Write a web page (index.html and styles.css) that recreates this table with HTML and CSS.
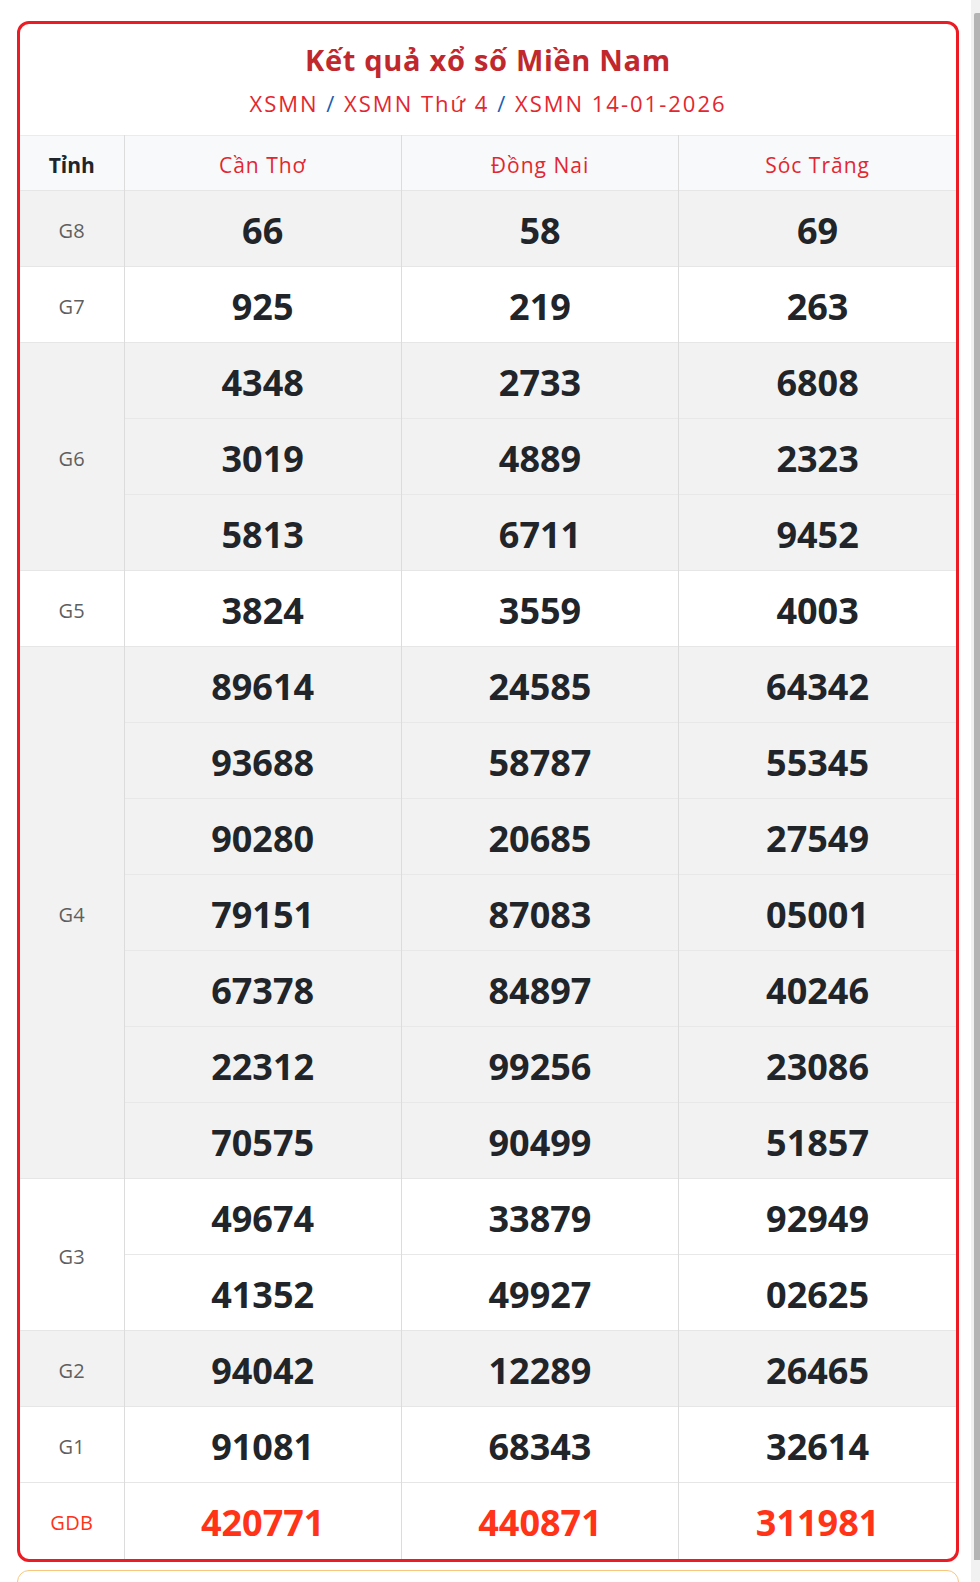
FILE: index.html
```html
<!DOCTYPE html>
<html lang="vi">
<head>
<meta charset="utf-8">
<title>Kết quả xổ số Miền Nam</title>
<link rel="stylesheet" href="styles.css">
</head>
<body>
<div class="page">
  <main class="main">
    <section class="card">
      <header class="card-head">
        <h1 class="title">Kết quả xổ số Miền Nam</h1>
        <div class="crumbs"><a href="#">XSMN</a> <span class="sep">/</span> <a href="#">XSMN Thứ 4</a> <span class="sep">/</span> <a href="#">XSMN 14-01-2026</a></div>
      </header>
      <table class="results">
        <colgroup><col class="c-label"><col><col><col></colgroup>
        <thead>
          <tr><th class="lbl-h">Tỉnh</th><th>Cần Thơ</th><th>Đồng Nai</th><th>Sóc Trăng</th></tr>
        </thead>
        <tbody class="gray">
          <tr><td class="lbl">G8</td><td>66</td><td>58</td><td>69</td></tr>
        </tbody>
        <tbody>
          <tr><td class="lbl">G7</td><td>925</td><td>219</td><td>263</td></tr>
        </tbody>
        <tbody class="gray">
          <tr><td class="lbl" rowspan="3">G6</td><td>4348</td><td>2733</td><td>6808</td></tr>
          <tr class="sub"><td>3019</td><td>4889</td><td>2323</td></tr>
          <tr class="sub"><td>5813</td><td>6711</td><td>9452</td></tr>
        </tbody>
        <tbody>
          <tr><td class="lbl">G5</td><td>3824</td><td>3559</td><td>4003</td></tr>
        </tbody>
        <tbody class="gray">
          <tr><td class="lbl" rowspan="7">G4</td><td>89614</td><td>24585</td><td>64342</td></tr>
          <tr class="sub"><td>93688</td><td>58787</td><td>55345</td></tr>
          <tr class="sub"><td>90280</td><td>20685</td><td>27549</td></tr>
          <tr class="sub"><td>79151</td><td>87083</td><td>05001</td></tr>
          <tr class="sub"><td>67378</td><td>84897</td><td>40246</td></tr>
          <tr class="sub"><td>22312</td><td>99256</td><td>23086</td></tr>
          <tr class="sub"><td>70575</td><td>90499</td><td>51857</td></tr>
        </tbody>
        <tbody>
          <tr><td class="lbl" rowspan="2">G3</td><td>49674</td><td>33879</td><td>92949</td></tr>
          <tr class="sub"><td>41352</td><td>49927</td><td>02625</td></tr>
        </tbody>
        <tbody class="gray">
          <tr><td class="lbl">G2</td><td>94042</td><td>12289</td><td>26465</td></tr>
        </tbody>
        <tbody>
          <tr><td class="lbl">G1</td><td>91081</td><td>68343</td><td>32614</td></tr>
        </tbody>
        <tbody class="special">
          <tr><td class="lbl">GDB</td><td>420771</td><td>440871</td><td>311981</td></tr>
        </tbody>
      </table>
    </section>
    <section class="next-card"></section>
  </main>
  <aside class="scrollbar"><div class="thumb"></div></aside>
</div>
</body>
</html>
```

FILE: styles.css
```css
html, body {
  margin: 0;
  padding: 0;
  height: 1582px;
  overflow: hidden;
  background: #fff;
}

body {
  font-family: "Open Sans", "Noto Sans", "DejaVu Sans", sans-serif;
  color: #212529;
}

.page {
  display: flex;
  height: 1582px;
}

.main {
  flex: 1;
  padding: 21px 12px 0 17px;
  display: flex;
  flex-direction: column;
  gap: 8px;
  overflow: hidden;
}

.card {
  flex: none;
  border: 3px solid #ed1c24;
  border-radius: 12px;
  overflow: hidden;
  background: #fff;
}

.card-head {
  height: 111px;
  box-sizing: border-box;
  padding-top: 17px;
  text-align: center;
}

.title {
  margin: 0;
  font-size: 29px;
  line-height: 38px;
  font-weight: 700;
  letter-spacing: 0.7px;
  color: #c0282d;
}

.crumbs {
  margin-top: 9px;
  font-size: 22px;
  line-height: 30px;
  letter-spacing: 2px;
  color: #e3262f;
}

.crumbs a {
  color: #e3262f;
  text-decoration: none;
}

.crumbs .sep {
  color: #1a5fb4;
}

.results {
  width: 100%;
  border-collapse: collapse;
  table-layout: fixed;
}

.c-label {
  width: 104px;
}

.results th,
.results td {
  padding: 0;
  text-align: center;
  vertical-align: middle;
  border-left: 1px solid #dcdcdc;
}

.results th:first-child,
.results td.lbl {
  border-left: none;
}

.results thead tr {
  height: 55px;
  background: #f8f9fa;
  border-top: 1px solid #e9ecef;
}

.results th {
  padding-top: 3px;
  font-size: 21px;
  font-weight: 400;
  letter-spacing: 1px;
  color: #e3262f;
}

.results th.lbl-h {
  font-weight: 700;
  letter-spacing: 0;
  color: #212529;
}

.results tbody tr {
  height: 76px;
}

.results tbody {
  border-top: 1px solid #e6e6e6;
}

.results tbody.gray {
  background: #f2f2f2;
}

.results tr.sub td {
  border-top: 1px solid #e8e8e8;
}

.results td {
  padding-top: 4px;
  font-size: 36px;
  font-weight: 700;
  color: #212529;
}

.results td.lbl {
  font-size: 20px;
  font-weight: 400;
  letter-spacing: 0.3px;
  color: #5f5f5f;
}

.results tbody.special td {
  color: #ff3318;
}

.results tbody.special td.lbl {
  color: #ff3318;
}

.next-card {
  flex: none;
  height: 120px;
  border: 1px solid #f8c77c;
  border-radius: 12px;
}

.scrollbar {
  flex: none;
  width: 9px;
  background: #f1f1f1;
  display: flex;
  flex-direction: column;
  padding-top: 13px;
  box-sizing: border-box;
}

.thumb {
  margin-left: 3px;
  height: 1547px;
  background: #b4b4b4;
  border-top-left-radius: 2px;
}
```
